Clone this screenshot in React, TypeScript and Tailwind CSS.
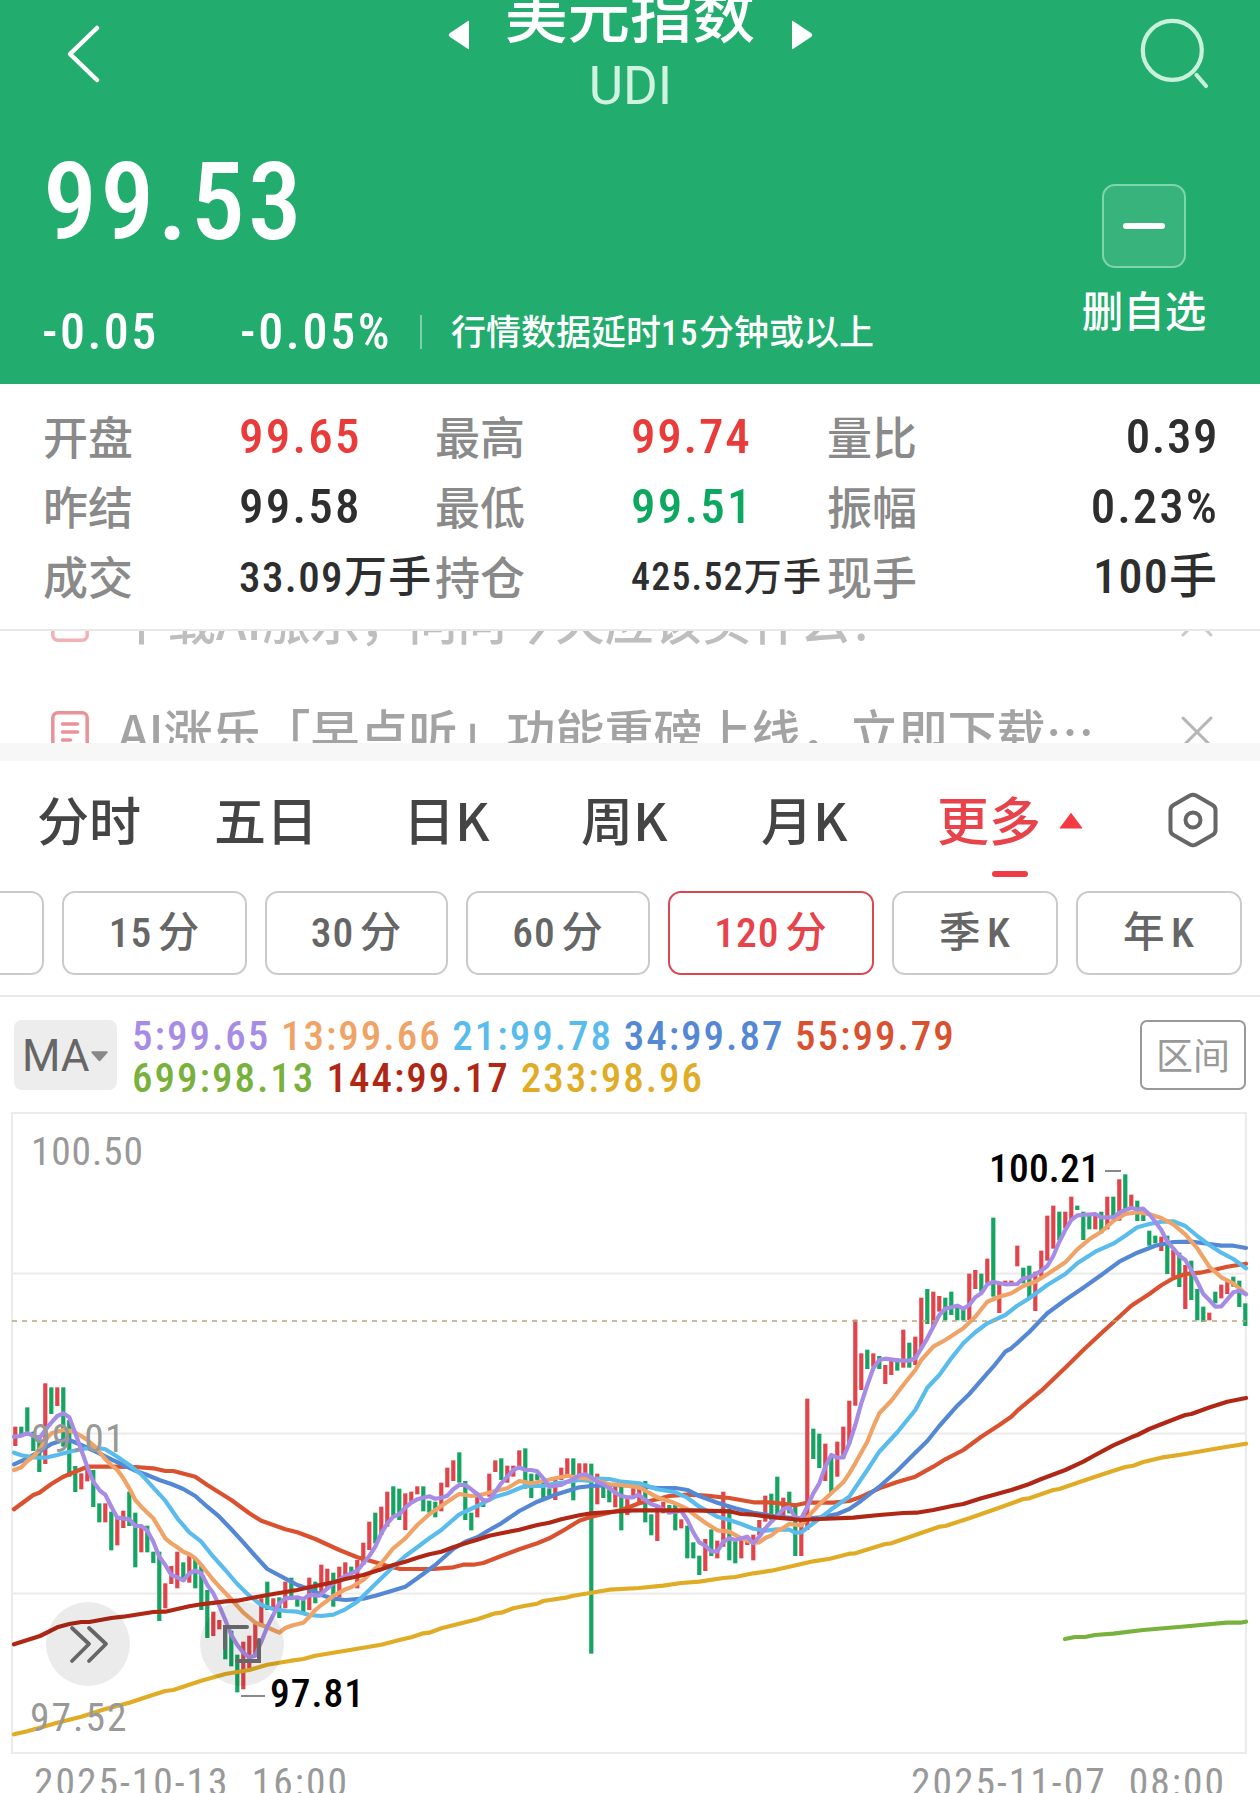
import React from "react";

const CJK = "font-['Noto_Sans_CJK_SC',sans-serif]";
const NUM = "font-['Roboto_Condensed','Noto_Sans_CJK_SC',sans-serif]";

/* Candles: colour, high, low. Coordinates are thirds of a pixel below each block's origin. */
const CANDLES_A =
  "R200-258 G200-225 G142-220 G215-273 G225-336 R70-312 G82-162 R82-138 G82-260 G180-350 G318-396 R340-388 R320-364 G330-441 G430-487 R430-487 G455-571 R475-556 R452-504 G395-498 G458-622 R498-577 G497-577 G575-609 G575-783 R670-745 R618-672 R575-685 G607-665 R585-668 G595-685 G612-750 G690-834 R755-828 R780-808 G800-898 G812-919 G884-997 R845-988 R827-925 R790-890 R715-800 G665-750 R715-750 G712-774 R665-745 G653-720 G710-740 G715-757 R653-750 G665-730 R614-700 R626-690 G638-740 R620-712 R607-655 G620-640 R600-685 R548-615 R485-570 G458-550 R440-525 R395-500 G379-467 G386-480 R400-510 R395-430 R379-403";
const CANDLES_B =
  "G319-394 G362-398 G365-412 R308-394 R263-322 R241-303 G217-308 G303-420 G398-451 R350-412 G355-381 R281-350 R241-276 G235-300 R257-308 R257-290 R211-265 G205-326 G281-354 G281-300 G300-354 G325-354 R300-360 R263-300 R235-290 G235-361 R250-290 R250-290 G251-821 R281-373 G310-354 G315-367 R320-382 G320-451 R350-405 R303-350 R320-375 G303-427 G403-466 R380-483 R365-400 G375-403 G375-451 R418-445 G437-535 G487-535 G527-585 R477-573 G448-528 R482-535 R335-500 G385-541 G475-550 R480-535 R475-495 R464-541 R420-465 R347-425 G341-420 G290-410 R353-410 G335-400 G380-528 R420-528 R56-450";
const CANDLES_C =
  "G866-957 G881-984 R911-1023 G950-1060 R905-1010 R860-955 R782-910 R539-797 R640-750 G629-687 R640-680 G648-687 R675-732 R655-705 G655-692 R569-683 G608-683 R590-675 R473-625 G447-552 R455-560 R468-515 G473-541 G455-525 G500-541 G505-541 R401-540 R390-447 G401-455 R356-430 G233-470 R430-519 R422-435 R422-435 R317-379 G383-430 G377-475 R395-513 R332-410 R227-362 R197-326 G215-300 R215-265 R170-240 G197-210 G215-300 G220-268 R220-268 G215-280 R170-268 G170-230 R118-242 G103-210 R164-210 G182-243 G215-243 G272-317 G287-310 R290-333 G287-402 R330-410 G338-441 R375-507 G362-480 G447-541 G500-546 R518-541 G455-490 R434-475 R425-462 G410-440 G422-501 G490-558";

const ORIGINS = { A: [0, 1360], B: [380, 1380], C: [780, 1140] } as const;

const candles = ([["A", CANDLES_A], ["B", CANDLES_B], ["C", CANDLES_C]] as const)
  .flatMap(([key, data]) =>
    data.split(" ").map((c) => {
      const [hi, lo] = c.slice(1).split("-").map(Number);
      const oy = ORIGINS[key][1];
      return { up: c[0] === "R", y: oy + hi / 3, h: (lo - hi) / 3 };
    })
  )
  .map((c, i) => ({ ...c, x: 15.3 + 6 * i }));

type Line = { color: string; A: string; B: string; C: string };

const LINES: Line[] = [
  {
    color: "#d9512f",
    A: "42,448 100,405 118,398 154,372 190,350 226,335 262,320 334,320 406,321 460,325 496,333 520,333 586,350 622,375 694,420 748,460 784,482 820,495 856,508 892,517 946,537 1018,570 1072,592 1126,607 1162,618 1198,626",
    B: "60,567 160,567 220,562 250,554 280,554 310,549 364,528 418,508 472,490 508,475 544,455 598,422 634,410 688,398 724,390 778,370 832,358 868,348 922,344 976,347 1048,354 1120,367 1174,367 1246,376",
    C: "82,1088 160,1088 208,1083 244,1070 298,1045 352,1026 406,1010 460,980 496,958 550,930 604,890 658,855 694,830 712,812 784,752 820,718 856,683 910,630 964,580 1018,530 1054,497 1108,462 1144,436 1180,415 1216,402 1260,398 1310,388 1342,380 1398,371",
  },
  {
    color: "#5588d4",
    A: "42,313 82,295 118,275 154,252 190,240 208,240 244,255 298,280 334,298 370,315 406,332 442,345 478,360 514,372 550,387 586,408 622,440 658,470 694,508 730,547 766,588 802,627 856,656 892,675 928,687 964,705 1000,716 1036,720 1090,716 1126,707 1162,697",
    B: "76,620 112,595 166,555 220,507 256,485 292,472 328,450 364,430 418,393 472,365 526,344 598,322 634,318 706,315 778,318 832,324 886,324 922,330 958,348 1012,368 1066,385 1120,398 1192,410 1246,415",
    C: "82,1136 120,1132 172,1122 208,1107 244,1082 298,1040 352,992 406,938 442,903 478,858 532,797 568,762 622,700 640,680 676,635 694,625 748,576 802,520 856,480 910,443 964,405 1018,365 1072,338 1126,317 1180,306 1234,305 1288,312 1324,317 1360,317 1398,324",
  },
  {
    color: "#59bcec",
    A: "42,278 64,286 100,292 136,293 172,285 208,275 244,268 280,262 316,268 352,290 388,315 424,343 460,383 496,422 532,475 568,517 604,545 640,590 676,630 712,672 748,707 784,735 820,747 856,753 892,755 928,765 964,768 1000,764 1036,748 1072,725 1108,690 1144,655 1180,620",
    B: "76,528 112,502 148,475 184,450 238,403 292,378 346,350 382,340 418,325 436,318 490,318 526,310 562,306 598,300 634,303 652,296 688,297 724,305 778,310 814,322 832,328 886,337 922,353 958,380 1012,410 1048,420 1084,432 1120,446 1156,452 1192,448 1228,449 1246,458",
    C: "64,1177 100,1150 154,1108 208,1070 262,990 298,935 352,877 406,810 442,743 478,705 514,655 550,610 586,577 622,550 676,525 712,497 748,475 802,435 856,402 892,370 946,335 1000,311 1036,287 1072,262 1108,252 1144,245 1180,244 1216,258 1252,288 1288,315 1324,338 1360,357 1398,385",
  },
  {
    color: "#f0a367",
    A: "42,330 64,322 82,303 100,290 118,270 136,240 154,220 190,210 208,212 226,218 244,228 262,240 280,255 298,275 316,298 334,315 352,330 370,355 388,385 406,420 424,440 442,458 460,475 478,505 496,535 514,550 532,562 550,575 568,583 586,595 604,615 640,660 658,680 694,718 730,758 766,788 802,802 820,810 838,818 856,804 874,797 910,788 928,770 946,750 964,735 982,722 1000,708 1018,698 1036,688 1054,682 1090,660 1126,625 1144,610 1180,565",
    B: "76,475 112,435 148,403 184,378 220,353 238,342 274,348 310,343 346,333 382,325 418,303 454,310 490,303 526,295 562,287 598,293 634,297 688,313 724,315 778,322 832,352 886,370 922,387 940,402 976,428 1012,451 1048,455 1084,475 1120,488 1138,487 1156,474 1174,466 1192,452 1210,444 1228,432",
    C: "64,1156 82,1133 118,1093 154,1060 190,1027 208,1000 226,970 262,905 280,860 298,820 334,782 370,735 406,690 424,660 460,620 496,600 550,565 586,530 622,485 658,470 694,460 730,438 766,425 802,403 856,367 892,328 928,298 964,275 1000,243 1036,222 1072,217 1108,223 1144,234 1180,253 1216,283 1252,325 1288,380 1324,412 1360,430 1398,462",
  },
  {
    color: "#a78ce6",
    A: "42,230 60,228 82,220 118,235 136,210 154,188 172,168 190,160 208,172 226,220 244,270 262,320 280,365 300,392 316,404 334,440 352,473 388,478 406,498 424,498 442,512 460,545 478,590 496,615 514,645 532,652 550,661 568,640 586,632 604,640 622,675 640,700 658,737 676,780 694,825 712,855 730,878 748,892 766,887 784,845 802,800 820,765 838,730 856,715 892,712 910,717 928,705 958,707 1000,670 1036,648 1072,632 1108,588 1126,560 1144,520 1162,490 1180,470",
    B: "58,403 76,383 94,368 112,358 130,353 148,349 166,356 184,353 202,347 220,328 238,315 256,315 274,328 292,342 310,362 328,360 346,335 364,310 382,290 400,270 418,262 436,270 454,270 472,274 490,295 508,320 526,317 544,315 562,305 580,298 598,286 616,283 634,292 652,305 670,313 688,325 706,338 724,348 742,352 760,352 775,344 796,360 814,373 832,378 850,388 868,397 904,393 922,420 940,457 958,487 976,497 994,514 1012,514 1030,485 1048,475 1066,480 1084,475 1102,470 1120,490 1138,470 1156,445 1174,425 1192,408 1210,387 1228,382 1246,413",
    C: "64,1135 82,1100 100,1060 118,1030 136,980 154,945 172,953 190,952 208,910 226,855 244,790 262,735 280,685 298,660 316,656 352,661 388,662 406,655 424,625 442,595 460,560 478,525 496,506 532,497 550,506 568,495 586,472 604,460 622,433 640,426 676,433 712,432 730,415 748,412 766,403 784,392 802,378 820,348 838,305 856,270 874,240 892,226 946,222 964,232 1000,232 1018,218 1036,210 1054,204 1072,208 1090,206 1108,223 1126,245 1144,270 1162,305 1180,325 1198,347 1216,360 1234,390 1252,425 1270,462 1288,480 1306,500 1324,499 1342,478 1360,457 1378,452 1398,463",
  },
  {
    color: "#b02815",
    A: "42,853 120,828 172,802 208,792 244,786 268,786 334,774 370,770 460,756 496,755 568,739 604,733 676,724 712,722 766,712 820,702 892,690 928,682 1000,667 1036,657 1090,645 1144,628 1180,615",
    B: "76,545 112,533 148,523 184,515 220,502 256,490 292,479 328,467 364,460 418,449 472,435 508,428 544,418 598,406 634,400 688,396 760,391 832,391 940,391 1048,394 1084,402 1120,404 1192,413",
    C: "64,1140 120,1137 220,1133 298,1125 370,1119 410,1118 460,1110 520,1097 550,1092 604,1075 640,1065 694,1050 748,1032 784,1017 856,990 910,965 946,945 1000,916 1054,892 1072,885 1108,867 1144,853 1198,832 1216,825 1234,822 1290,802 1342,785 1398,774",
  },
  {
    color: "#e0ac26",
    A: "42,1123 82,1114 172,1088 244,1070 316,1047 388,1028 442,1010 496,993 520,990 604,962 676,942 748,930 802,914 874,902 910,897 946,887 1018,875 1090,863 1144,854 1198,840",
    B: "94,772 130,760 148,758 184,745 238,731 292,718 346,700 364,698 400,685 436,677 472,671 490,663 562,652 580,647 634,638 688,629 778,624 850,617 904,609 958,605 1030,594 1066,591 1120,580 1174,572 1228,560",
    C: "100,1264 150,1256 208,1241 226,1240 316,1212 334,1210 406,1185 478,1160 496,1158 568,1135 658,1103 730,1077 748,1075 820,1050 838,1047 910,1022 982,998 1036,981 1060,977 1090,966 1144,953 1216,942 1306,926 1398,911",
  },
  { color: "#78b13c", A: "", B: "", C: "855,1497 885,1491 915,1491 945,1485 1000,1481 1090,1470 1230,1458 1340,1448 1380,1448 1398,1445" },
];

function toPoints(line: Line) {
  return (["A", "B", "C"] as const)
    .flatMap((k) =>
      line[k]
        .split(" ")
        .filter(Boolean)
        .map((p) => {
          const [x, y] = p.split(",").map(Number);
          return `${(ORIGINS[k][0] + x / 3).toFixed(1)},${(ORIGINS[k][1] + y / 3).toFixed(1)}`;
        })
    )
    .join(" ");
}

function Header() {
  return (
    <header className="relative flex h-[384px] shrink-0 flex-col overflow-hidden bg-[#22ac6e] text-white">
      <div className="flex h-[130px] items-start justify-between">
        <svg className="ml-[66px] mt-[24px] h-[60px] w-[40px]" viewBox="0 0 40 60" fill="none" stroke="#fff" strokeWidth="4.500" strokeLinecap="round" strokeLinejoin="round">
          <path d="M31 4 4 30 31 56" />
        </svg>
        <div className="flex flex-col items-center pl-[17px]">
          <div className="-mt-[27px] flex h-[92px] items-center">
            <svg className="mt-[32px] h-[30px] w-[22px]" viewBox="0 0 22 30" fill="#fff">
              <path d="M21 1.500v27q0 1-1 .4L2 17q-2.500-2 0-4L20 1q1-.5 1 .5Z" />
            </svg>
            <h1 className={`${CJK} -mt-[16px] ml-[35px] mr-[36px] whitespace-nowrap text-[62.500px] font-medium leading-[92px]`}>美元指数</h1>
            <svg className="mt-[32px] h-[30px] w-[22px]" viewBox="0 0 22 30" fill="#fff">
              <path d="M1 1.500v27q0 1 1 .4L20 17q2.500-2 0-4L2 1Q1 .5 1 1.500Z" />
            </svg>
          </div>
          <div className="-mt-[7px] font-[Roboto] text-[53px] leading-[56px] text-[#d0f3e1]">UDI</div>
        </div>
        <svg className="mr-[50px] mt-[17px] h-[72px] w-[72px]" viewBox="0 0 72 72" fill="none" stroke="#c8f1dc" strokeWidth="4.200">
          <circle cx="34.300" cy="33.300" r="29.500" />
          <path d="M58.500 58 68 69" strokeLinecap="round" />
        </svg>
      </div>
      <div className="flex flex-1 justify-between">
        <div>
          <div className={`${NUM} ml-[43px] mt-[17px] text-[108px] font-medium leading-[110px] tracking-[3.200px]`}>99.53</div>
          <div className="mt-[47px] flex h-[56px] items-center">
            <span className={`${NUM} ml-[42px] w-[198px] text-[50px] font-medium tracking-[2.500px]`}>-0.05</span>
            <span className={`${NUM} w-[152px] text-[50px] font-medium tracking-[2.700px]`}>-0.05%</span>
            <span className="ml-[28px] h-[34px] w-[2px] bg-[#7dd0a8]" />
            <span className={`${NUM} ml-[29px] mt-[5px] whitespace-nowrap text-[35px] font-medium`}>
              行情数据延时<span className="tracking-[1.500px]">15</span>分钟或以上
            </span>
          </div>
        </div>
        <div className="mr-[53px] flex w-[126px] flex-col items-center pt-[54px]">
          <div className="flex h-[84px] w-[84px] items-center justify-center rounded-[13px] border-2 border-[#7fd6ab] bg-[#38b37c]">
            <span className="h-[6px] w-[42px] rounded-full bg-white" />
          </div>
          <span className={`${CJK} mt-[13px] whitespace-nowrap text-[41.500px] font-medium leading-[56px]`}>删自选</span>
        </div>
      </div>
    </header>
  );
}

function Quotes() {
  const label = `${CJK} -mt-[3px] whitespace-nowrap text-[45px] font-medium text-[#8a8a8a]`;
  const value = `${NUM} whitespace-nowrap font-medium`;
  return (
    <section className="grid h-[245px] shrink-0 grid-cols-[196px_196px_196px_196px_130px_1fr] grid-rows-[70px_70px_70px] items-center pl-[43px] pr-[43px] pt-[18px] text-[#2e2e2e]">
      <span className={label}>开盘</span>
      <span className={`${value} text-[49px] tracking-[2.200px] text-[#e93b39]`}>99.65</span>
      <span className={label}>最高</span>
      <span className={`${value} text-[49px] tracking-[1.800px] text-[#e93b39]`}>99.74</span>
      <span className={label}>量比</span>
      <span className={`${value} -mr-[2px] text-right text-[49px] tracking-[1.500px]`}>0.39</span>
      <span className={label}>昨结</span>
      <span className={`${value} text-[49px] tracking-[2.200px]`}>99.58</span>
      <span className={label}>最低</span>
      <span className={`${value} text-[49px] tracking-[2.200px] text-[#0ca860]`}>99.51</span>
      <span className={label}>振幅</span>
      <span className={`${value} -mr-[2px] text-right text-[49px] tracking-[2px]`}>0.23%</span>
      <span className={label}>成交</span>
      <span className={`${value} text-[43px] tracking-[1.400px]`}>33.09万手</span>
      <span className={label}>持仓</span>
      <span className={`${value} text-[38px] tracking-[1.200px]`}>425.52万手</span>
      <span className={label}>现手</span>
      <span className={`${value} text-right text-[48px]`}>
        <span className="tracking-[1.300px]">100</span>手
      </span>
    </section>
  );
}

function NewsIcon() {
  return (
    <svg className="h-[42px] w-[38px] shrink-0" viewBox="0 0 38 42" fill="none" stroke="#ea9298" strokeWidth="3.500">
      <rect x="1.800" y="1.800" width="34.400" height="38.400" rx="5" />
      <path d="M11.500 13h15M11.500 21h15M11.500 29h8" strokeLinecap="round" />
    </svg>
  );
}

function CloseIcon() {
  return (
    <svg className="h-[32px] w-[32px] shrink-0" viewBox="0 0 32 32" stroke="#b5b5b5" strokeWidth="3" strokeLinecap="round">
      <path d="m2 2 28 28M30 2 2 30" />
    </svg>
  );
}

function News() {
  const text = `${CJK} ml-[29px] -mt-[4px] flex-1 whitespace-nowrap text-[49px] font-medium leading-[60px] text-[#a3a3a3]`;
  return (
    <section className="flex h-[114px] shrink-0 flex-col overflow-hidden border-t-2 border-[#e8e8e8]">
      <div className="-mt-[40px] flex h-[60px] shrink-0 items-center pl-[51px] pr-[47px] opacity-70">
        <NewsIcon />
        <span className={text}>下载AI涨乐，问问今天应该买什么？</span>
        <CloseIcon />
      </div>
      <div className="mt-[51px] flex h-[60px] shrink-0 items-center pl-[51px] pr-[47px]">
        <NewsIcon />
        <span className={text}>AI涨乐「早点听」功能重磅上线，立即下载⋯</span>
        <CloseIcon />
      </div>
    </section>
  );
}

function Tabs() {
  const tab = `${CJK} whitespace-nowrap text-[52px] leading-[67px] font-medium text-[#444]`;
  return (
    <nav className="flex h-[130px] shrink-0 items-start pl-[37px] pt-[24px]">
      <span className={`${tab} w-[177px]`}>分时</span>
      <span className={`${tab} w-[189px]`}>五日</span>
      <span className={`${tab} w-[178px]`}>日K</span>
      <span className={`${tab} w-[180px]`}>周K</span>
      <span className={`${tab} w-[176px]`}>月K</span>
      <div className="flex w-[146px] flex-col items-center">
        <div className="flex w-full items-center">
          <span className={`${CJK} whitespace-nowrap text-[52px] font-medium leading-[67px] text-[#e8424a]`}>更多</span>
          <svg className="ml-[18px] mt-[5px] h-[18px] w-[26px]" viewBox="0 0 26 18" fill="#f43b44">
            <path d="M13 0 25 16q.5 1-.5 1H1.500q-1 0-.5-1Z" />
          </svg>
        </div>
        <span className="mt-[19px] h-[6px] w-[36px] rounded-full bg-[#ee3b45]" />
      </div>
      <svg className="ml-[85px] mt-[7px] h-[56px] w-[50px] shrink-0" viewBox="0 0 50 56" fill="none" stroke="#666" strokeWidth="4" strokeLinejoin="round">
        <path d="M22 3.500q3-1.700 6 0L44.500 13q3 1.700 3 5v20q0 3.300-3 5L28 52.500q-3 1.700-6 0L5.500 43q-3-1.700-3-5V18q0-3.300 3-5Z" />
        <circle cx="25" cy="28" r="7.500" />
      </svg>
    </nav>
  );
}

function Periods() {
  const base = `${NUM} flex h-[84px] shrink-0 items-center justify-center rounded-[13px] border-2 whitespace-pre text-[41.500px] font-medium tracking-[1px] [word-spacing:-5px]`;
  const idle = "border-[#cacaca] text-[#666]";
  return (
    <div className="flex h-[106px] shrink-0 items-start gap-[18px] overflow-hidden border-b-2 border-[#e8e8e8]">
      <span className={`${base} ${idle} -ml-[100px] w-[144px]`} />
      <span className={`${base} ${idle} w-[185px]`}>15 分</span>
      <span className={`${base} ${idle} w-[183px]`}>30 分</span>
      <span className={`${base} ${idle} w-[184px]`}>60 分</span>
      <span className={`${base} w-[206px] border-[#dc4650] text-[#e8424a]`}>120 分</span>
      <span className={`${base} ${idle} w-[166px]`}>季 K</span>
      <span className={`${base} ${idle} w-[166px]`}>年 K</span>
    </div>
  );
}

function Averages() {
  return (
    <section className="flex h-[115px] shrink-0 items-start pl-[14px] pr-[14px] pt-[23px]">
      <div className="flex h-[70px] w-[103px] items-center rounded-[8px] bg-[#ededed] pl-[8px] pt-[2px] font-[Roboto] text-[44px] text-[#666]">
        MA
        <svg className="ml-[1px] h-[11px] w-[17px]" viewBox="0 0 18 11" fill="#888">
          <path d="M1 0h16q1 .5.500 1.500L10 10q-1 1-2 0L.5 1.500Q0 .5 1 0Z" />
        </svg>
      </div>
      <div className={`${NUM} ml-[15px] mt-[-5px] flex flex-1 flex-col text-[41px] font-medium leading-[42px] tracking-[2px]`}>
        <div className="flex gap-[10.500px]">
          <span className="text-[#a78ce6]">5:99.65</span>
          <span className="text-[#f0a367]">13:99.66</span>
          <span className="text-[#59bcec]">21:99.78</span>
          <span className="text-[#5588d4]">34:99.87</span>
          <span className="text-[#d9512f]">55:99.79</span>
        </div>
        <div className="flex gap-[11px]">
          <span className="text-[#78b13c]">699:98.13</span>
          <span className="text-[#b02815]">144:99.17</span>
          <span className="text-[#e0ac26]">233:98.96</span>
        </div>
      </div>
      <div className={`${CJK} flex h-[70px] w-[106px] items-center justify-center rounded-[7px] border-2 border-[#999] text-[37px] text-[#999]`}>区间</div>
    </section>
  );
}

function Chart() {
  const label = `${NUM} absolute text-[39.500px] leading-[44px]`;
  return (
    <section className="relative h-[642px] shrink-0">
      <svg className="block h-[642px] w-[1260px]" viewBox="0 1112 1260 642">
        <g stroke="#ebebeb" strokeWidth="2" fill="none">
          <path d="M12 1113H1246V1753H12ZM12 1273.500H1246M12 1433.500H1246M12 1593.500H1246" />
        </g>
        {candles.map((c, i) => (
          <rect key={i} x={c.x - 2.1} y={c.y} width="4.200" height={c.h} fill={c.up ? "#e2444c" : "#13a561"} />
        ))}
        {LINES.map((l) => (
          <polyline key={l.color} points={toPoints(l)} fill="none" stroke={l.color} strokeWidth="4.200" strokeLinejoin="round" strokeLinecap="round" />
        ))}
        <path d="M12 1321H1246" stroke="#b9a678" strokeWidth="1.600" strokeDasharray="5 5" />
        <path d="M241 1696h24M1105 1171h16" stroke="#888" strokeWidth="2" />
        <g fill="#000" fillOpacity=".08">
          <circle cx="88" cy="1644" r="42" />
          <circle cx="242" cy="1644" r="42" />
        </g>
        <g fill="none" stroke="#666" strokeLinecap="round" strokeLinejoin="round">
          <path d="m72 1628 17 16-17 17M89 1628l17 16-17 17" strokeWidth="3.800" />
          <path d="M247 1627H225V1648M237 1661H259V1640" strokeWidth="4" strokeLinejoin="miter" />
        </g>
      </svg>
      <span className={`${label} left-[31px] top-[18px] tracking-[0.800px] text-[#999]`}>100.50</span>
      <span className={`${label} left-[31px] top-[305px] tracking-[1.300px] text-[#999]`}>99.01</span>
      <span className={`${label} left-[30px] top-[584px] tracking-[2px] text-[#999]`}>97.52</span>
      <span className={`${label} left-[989px] top-[35px] font-medium tracking-[0.200px] text-black`}>100.21</span>
      <span className={`${label} left-[270px] top-[560px] font-medium tracking-[1px] text-black`}>97.81</span>
    </section>
  );
}

export default function App() {
  return (
    <main className="flex h-[1793px] w-[1260px] flex-col overflow-hidden bg-white">
      <Header />
      <Quotes />
      <News />
      <div className="h-[18px] shrink-0 bg-[#f7f7f7]" />
      <Tabs />
      <Periods />
      <Averages />
      <Chart />
      <footer className={`${NUM} flex shrink-0 justify-between pl-[34px] pr-[34px] pt-[7px] text-[39.500px] leading-[44px] tracking-[2px] text-[#999]`}>
        <span className="whitespace-pre">2025-10-13  16:00</span>
        <span className="whitespace-pre">2025-11-07  08:00</span>
      </footer>
    </main>
  );
}
